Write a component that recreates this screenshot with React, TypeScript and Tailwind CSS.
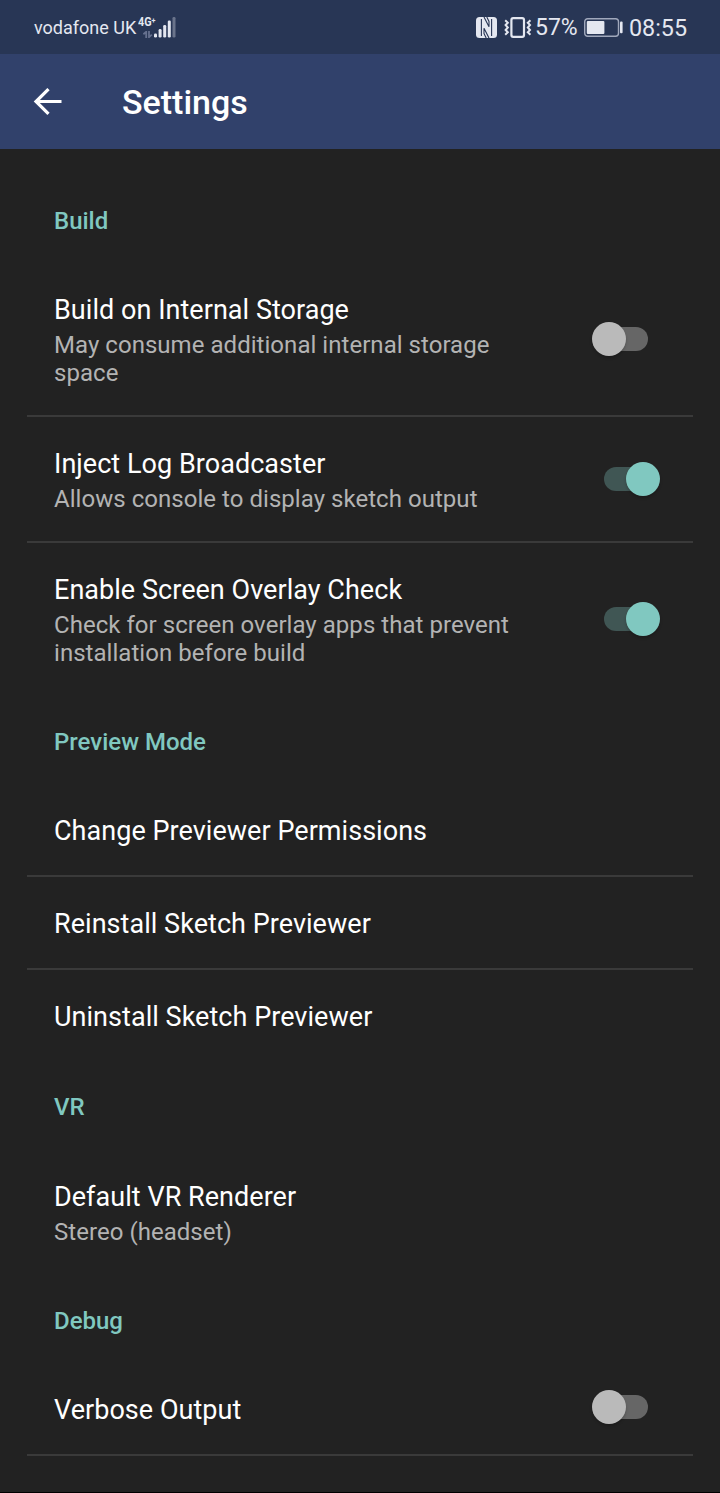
import { useState } from "react";

interface Preference {
  title: string;
  summary?: string[];
  enabled?: boolean;
}

interface Category {
  name: string;
  items: Preference[];
  trailingDivider?: boolean;
}

const categories: Category[] = [
  {
    name: "Build",
    items: [
      {
        title: "Build on Internal Storage",
        summary: ["May consume additional internal storage", "space"],
        enabled: false,
      },
      {
        title: "Inject Log Broadcaster",
        summary: ["Allows console to display sketch output"],
        enabled: true,
      },
      {
        title: "Enable Screen Overlay Check",
        summary: ["Check for screen overlay apps that prevent", "installation before build"],
        enabled: true,
      },
    ],
  },
  {
    name: "Preview Mode",
    items: [
      { title: "Change Previewer Permissions" },
      { title: "Reinstall Sketch Previewer" },
      { title: "Uninstall Sketch Previewer" },
    ],
  },
  {
    name: "VR",
    items: [{ title: "Default VR Renderer", summary: ["Stereo (headset)"] }],
  },
  {
    name: "Debug",
    items: [{ title: "Verbose Output", enabled: false }],
    trailingDivider: true,
  },
];

const SignalIcon = () => (
  <svg className="h-[21px] w-[22px] shrink-0" viewBox="0 0 22 21" fill="#e4e7f0">
    <rect x="0" y="16.5" width="3" height="4" rx="1.3" />
    <rect x="4.6" y="12" width="3" height="8.5" rx="1.3" />
    <rect x="9.2" y="8" width="3" height="12.5" rx="1.3" />
    <rect x="13.8" y="3.5" width="3" height="17" rx="1.3" />
    <rect x="18.5" y="0" width="3" height="20.5" rx="1.3" opacity="0.35" />
  </svg>
);

const DataArrowsIcon = () => (
  <svg className="h-[7px] w-[10px]" viewBox="0 0 10 7" fill="none" stroke="#66718f" strokeWidth="1.8">
    <path d="M0.4 3.2L3.2 0.8V7M6 0V6.2L8.8 3.6" />
  </svg>
);

const NfcIcon = () => (
  <svg className="h-[21px] w-[21px]" viewBox="0 0 21 21">
    <rect width="21" height="21" rx="3.5" fill="#e4e7f0" />
    <path
      d="M5.4 2V19M15.6 2V19M8 0L13 9.8V4.5L10.8 0M13 21L8 11.2V16.5L10.2 21"
      stroke="#283655"
      strokeWidth="1.1"
      fill="none"
    />
  </svg>
);

const VibrateIcon = () => (
  <svg className="h-[21px] w-[28px]" viewBox="0 0 28 21" fill="none" stroke="#e4e7f0">
    <rect x="7.4" y="1.1" width="12.6" height="18.8" rx="1.8" strokeWidth="2.2" />
    <path d="M1.2 3.3L3.8 5.7L1.6 8L3.8 10.5L1.6 13L3.8 15.3L1.2 17.7" strokeWidth="2" />
    <path d="M26.4 3.3L23.8 5.7L26 8L23.8 10.5L26 13L23.8 15.3L26.4 17.7" strokeWidth="2" />
  </svg>
);

const BatteryIcon = () => (
  <svg className="h-[19px] w-[39px]" viewBox="0 0 39 19">
    <rect x="0.7" y="0.7" width="33.8" height="17.6" rx="3" fill="none" stroke="#a0a8bc" strokeWidth="1.4" />
    <rect x="2.8" y="3" width="17.6" height="13" rx="1" fill="#e4e7f0" />
    <rect x="36" y="3.6" width="2.6" height="11.6" rx="1" fill="#e4e7f0" />
  </svg>
);

const StatusBar = () => (
  <div className="flex h-[54px] items-center justify-between bg-[#283655] pr-[33px] pl-[34px] text-[#e4e7f0]">
    <div className="flex h-[21px] items-center">
      <span className="w-[104px] pt-px text-[18px] whitespace-nowrap">vodafone UK</span>
      <div className="flex h-[21px] w-[16px] shrink-0 flex-col justify-between">
        <span className="w-[20px] origin-left scale-x-90 text-[12px] leading-[10px] font-bold whitespace-nowrap">
          4G<span className="relative -top-[3px] text-[8px]">+</span>
        </span>
        <span className="ml-[5px] flex">
          <DataArrowsIcon />
        </span>
      </div>
      <SignalIcon />
    </div>
    <div className="flex items-center">
      <NfcIcon />
      <span className="w-[7px]" />
      <VibrateIcon />
      <span className="ml-[3px] w-[49px] pt-[2px] text-[23px] whitespace-nowrap">57%</span>
      <BatteryIcon />
      <span className="ml-[6px] w-[58px] pt-[2px] text-[23.3px] whitespace-nowrap">08:55</span>
    </div>
  </div>
);

const AppBar = () => (
  <header className="flex h-[95px] items-center bg-[#31416b] pl-[33px] text-white">
    <button type="button" aria-label="Back">
      <svg className="h-[28px] w-[29px]" viewBox="0 0 29 28" fill="none" stroke="currentColor" strokeWidth="3.2">
        <path d="M28.5 13.5H3M15.5 1.1L3 13.5L15.5 25.9" />
      </svg>
    </button>
    <h1 className="ml-[60px] pt-[2px] text-[34px] font-medium">Settings</h1>
  </header>
);

const Switch = ({ initial, label }: { initial: boolean; label: string }) => {
  const [on, setOn] = useState(initial);

  return (
    <button
      type="button"
      role="switch"
      aria-checked={on}
      aria-label={label}
      onClick={() => setOn(!on)}
      className="relative flex h-[34px] w-[68px] items-center justify-center"
    >
      <span className={`h-[24px] w-[44px] rounded-full ${on ? "bg-[#405654]" : "bg-[#666666]"}`} />
      <span
        className={`absolute top-0 size-[34px] rounded-full shadow-[0_2px_3px_rgba(0,0,0,0.2)] ${
          on ? "right-0 bg-[#80c8c0]" : "left-0 bg-[#bababa]"
        }`}
      />
    </button>
  );
};

const PreferenceRow = ({ item, divider }: { item: Preference; divider: boolean }) => (
  <div className={`mx-[27px] flex items-center justify-between pr-[33px] pl-[27px] ${divider ? "border-b-2 border-[#3a3a3a]" : ""}`}>
    <div className={item.summary ? "pt-[31px] pb-[28px]" : "pt-[31px] pb-[27.7px]"}>
      <div className="text-[27px] leading-[32px] tracking-[0.04px] whitespace-nowrap text-white">{item.title}</div>
      {item.summary && (
        <div className="mt-[5px] text-[24px] leading-[28px] tracking-[0.04px] whitespace-nowrap text-[#b3b3b3]">
          {item.summary.map((line) => (
            <div key={line}>{line}</div>
          ))}
        </div>
      )}
    </div>
    {item.enabled !== undefined && (
      <div className={item.summary ? "" : "mb-[2px]"}>
        <Switch initial={item.enabled} label={item.title} />
      </div>
    )}
  </div>
);

const App = () => (
  <div className="flex h-[1493px] w-[720px] flex-col overflow-hidden border-b border-black bg-[#222222] font-['Roboto',sans-serif]">
    <StatusBar />
    <AppBar />
    <main className="pt-[25px]">
      {categories.map((category) => (
        <section key={category.name}>
          <h2 className="h-[89.2px] pt-[33px] pl-[54px] text-[24px] leading-[28px] font-medium text-[#80c8c0]">
            {category.name}
          </h2>
          {category.items.map((item, index) => (
            <PreferenceRow
              key={item.title}
              item={item}
              divider={index < category.items.length - 1 || !!category.trailingDivider}
            />
          ))}
        </section>
      ))}
    </main>
  </div>
);

export default App;
